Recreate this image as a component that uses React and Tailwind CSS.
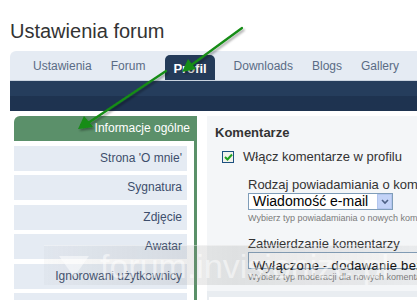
import React from 'react';

const tabs = ['Ustawienia', 'Forum', 'Profil', 'Downloads', 'Blogs', 'Gallery'];
const menu = ["Strona 'O mnie'", 'Sygnatura', 'Zdjęcie', 'Awatar', 'Ignorowani użytkownicy', 'Ustawienia'];

function Arrows() {
  return (
    <svg className="absolute left-0 top-0 pointer-events-none" width="417" height="300">
      <defs>
        <filter id="sh" x="-20%" y="-20%" width="140%" height="140%">
          <feDropShadow dx="1.5" dy="2" stdDeviation="1.2" floodColor="#000" floodOpacity="0.35" />
        </filter>
      </defs>
      <g filter="url(#sh)" stroke="#148c14" strokeWidth="2.2" fill="#148c14" strokeLinecap="round">
        <line x1="242" y1="28" x2="190" y2="66" />
        <polygon points="182,72 188,59 196,69" stroke="none" />
        <line x1="166" y1="71" x2="88" y2="123" />
        <polygon points="78,129 84,116 93,127" stroke="none" />
      </g>
    </svg>
  );
}

function App() {
  return (
    <div className="relative w-[417px] h-[300px] overflow-hidden bg-white font-['Liberation_Sans',Arial,sans-serif]">
      <h1 className="pl-[10px] pt-[19px] h-[51px] text-[20px] leading-[24px] text-[#333]">Ustawienia forum</h1>

      <div className="ml-[10px] h-[30px] bg-[#e5ebf3] rounded-tl-[6px] flex items-end pl-[23px] gap-[19px] border-b border-[#c9d3df]">
        {tabs.map((t) =>
          t === 'Profil' ? (
            <div key={t} className="h-[25px] ml-[1px] px-[8px] bg-[#243b59] rounded-t-[5px] text-white font-bold text-[13px] leading-[27px]">
              {t}
            </div>
          ) : (
            <div key={t} className="h-[25px] text-[12px] leading-[22px] text-[#5a6b85]">
              {t}
            </div>
          )
        )}
      </div>
      <div className="ml-[10px] h-[30px] bg-gradient-to-b from-[#253d5c] from-50% to-[#1e3350] to-50%" />

      <div className="flex pt-[5px]">
        <div className="shrink-0 ml-[14px] w-[183px] h-[200px] border-r-[3px] border-[#5a9068]">
          <div className="h-[25px] -mr-[3px] bg-[#5b906a] rounded-tl-[6px] text-right pr-[7px] text-white text-[12px] leading-[25px]">
            Informacje ogólne
          </div>
          {menu.map((m) => (
            <div key={m} className="w-[173px] h-[25px] mt-[4.5px] bg-[#e5ebf3] text-right pr-[5px] text-[12px] leading-[25px] text-[#3d4e6c]">
              {m}
            </div>
          ))}
        </div>

        <div className="ml-[10px] flex-1 min-w-0 overflow-hidden h-[200px] bg-[#f4f6f8] pl-[8px] pt-[9px] text-[#333]">
          <div className="text-[13px] font-bold leading-[16px]">Komentarze</div>
          <div className="flex items-center mt-[8px] ml-[7px] h-[16px]">
            <div className="shrink-0 w-[12px] h-[12px] border border-[#1c5180] bg-[#f2f2ec] flex items-center justify-center">
              <svg width="9" height="8" viewBox="0 0 9 8">
                <path d="M1 4 L3.5 6.5 L8 1.5" stroke="#21a121" strokeWidth="2" fill="none" />
              </svg>
            </div>
            <span className="ml-[9px] text-[13px] whitespace-nowrap">Włącz komentarze w profilu</span>
          </div>

          <div className="ml-[33px] mt-[12px] whitespace-nowrap">
            <div className="text-[13px] leading-[15px]">Rodzaj powiadamiania o komentarzach</div>
            <div className="mt-[1px] w-[145px] h-[17px] border border-[#7f9db9] bg-white flex items-center">
              <span className="flex-1 pl-[4px] text-[14px] leading-[15px] text-black">Wiadomość e-mail</span>
              <div className="w-[15px] h-[15px] bg-[#c3d3f7] border border-[#b3c6ee] flex items-center justify-center">
                <svg width="8" height="6" viewBox="0 0 8 6">
                  <path d="M1 1 L4 4 L7 1" stroke="#4d6185" strokeWidth="1.6" fill="none" />
                </svg>
              </div>
            </div>
            <div className="mt-[3px] text-[9px] leading-[10px] text-[#7a7a7a]">Wybierz typ powiadamiania o nowych komentarzach</div>

            <div className="mt-[13px] text-[13px] leading-[15px]">Zatwierdzanie komentarzy</div>
            <div className="mt-[1px] w-[240px] h-[17px] border border-[#7f9db9] bg-white">
              <span className="pl-[4px] text-[13px] leading-[15px] tracking-[0.3px] text-black">Wyłączone - dodawanie bez moderacji</span>
            </div>
            <div className="mt-[3px] text-[9px] leading-[10px] text-[#7a7a7a]">Wybierz typ moderacji dla nowych komentarzy</div>
          </div>
          <div className="mt-[9px] -ml-[8px] h-[20px] bg-[#e9edf1] pt-[6px] pl-[2px]">
            <div className="h-full bg-white" />
          </div>
        </div>
      </div>

      <Arrows />

      <div className="absolute left-[44px] top-[245px] w-[380px] h-[40px] bg-gradient-to-r from-[#8a8a8a]/5 via-[#8a8a8a]/20 to-[#8a8a8a]/10 border-t border-white/40 flex items-center pointer-events-none">
        <svg width="32" height="24" viewBox="0 0 32 24" className="ml-[14px] shrink-0">
          <path d="M1 2 L31 2 L16 23 Z" fill="white" fillOpacity="0.5" />
        </svg>
        <span className="ml-[10px] text-[34px] leading-[38px] text-white/50 whitespace-nowrap">forum.invisionize.pl</span>
      </div>
    </div>
  );
}

export default App;
